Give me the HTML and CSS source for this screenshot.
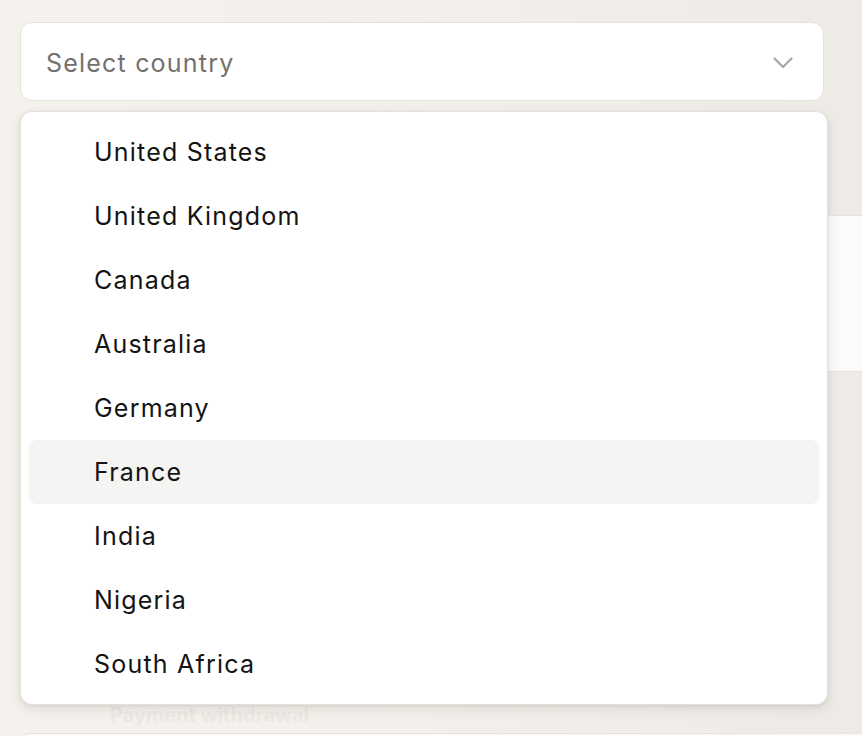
FILE: index.html
```html
<!DOCTYPE html>
<html lang="en">
<head>
<meta charset="utf-8">
<title>Select country</title>
<link rel="stylesheet" href="styles.css">
</head>
<body>
<div class="page">
  <div class="field">
    <button class="select" type="button">
      <span class="placeholder">Select country</span>
      <svg class="chevron" width="20" height="12" viewBox="0 0 20 12" fill="none"><path d="M1.5 1.5 L10 10 L18.5 1.5" stroke="#a9a5a1" stroke-width="2.2" stroke-linecap="round" stroke-linejoin="round"/></svg>
    </button>
    <ul class="menu">
      <li class="option">United States</li>
      <li class="option">United Kingdom</li>
      <li class="option">Canada</li>
      <li class="option">Australia</li>
      <li class="option">Germany</li>
      <li class="option active">France</li>
      <li class="option">India</li>
      <li class="option">Nigeria</li>
      <li class="option">South Africa</li>
    </ul>
  </div>
  <div class="bg-card"></div>
  <h2 class="bg-title">Payment withdrawal</h2>
  <div class="bg-card bottom"></div>
</div>
</body>
</html>
```

FILE: styles.css
```css
html, body {
  margin: 0;
  padding: 0;
  height: 100%;
  overflow: hidden;
}
body {
  font-family: Inter, "Noto Sans", sans-serif;
  background: linear-gradient(90deg, #f5f2ee 0%, #f3f0eb 50%, #eeebe7 100%);
}
.page {
  padding: 22px 0 0 20px;
}
.field {
  position: relative;
  width: 804px;
}
.select {
  box-sizing: border-box;
  width: 804px;
  height: 79px;
  display: flex;
  align-items: center;
  justify-content: space-between;
  padding: 2px 30px 0 25px;
  background: #ffffff;
  border: 1.5px solid #e6e3df;
  border-radius: 12px;
  font-family: inherit;
  cursor: pointer;
}
.placeholder {
  font-size: 25px;
  letter-spacing: 1.2px;
  color: #75706b;
}
.chevron {
  display: block;
}
.menu {
  position: absolute;
  z-index: 10;
  top: 89px;
  left: 0;
  box-sizing: border-box;
  width: 808px;
  margin: 0;
  padding: 8px;
  list-style: none;
  background: #ffffff;
  border: 1px solid #e4e1dd;
  border-radius: 12px;
  box-shadow: 0 4px 12px rgba(60, 50, 40, 0.12), 0 1px 3px rgba(60, 50, 40, 0.08);
}
.option {
  height: 64px;
  display: flex;
  align-items: center;
  padding-left: 65px;
  font-size: 25px;
  letter-spacing: 1.2px;
  color: #141414;
  border-radius: 8px;
}
.option.active {
  background: #f4f4f3;
}
.bg-card {
  box-sizing: border-box;
  height: 157px;
  margin-top: 114px;
  width: 900px;
  background: #fbfbfa;
  border: 1.5px solid #e6e2dd;
  border-radius: 12px;
}
.bg-title {
  margin: 0;
  padding: 330px 0 0 90px;
  font-size: 20px;
  font-weight: 700;
  line-height: 26px;
  color: #ece8e3;
}
.bg-card.bottom {
  margin-top: 5px;
  margin-left: -2px;
}
```
